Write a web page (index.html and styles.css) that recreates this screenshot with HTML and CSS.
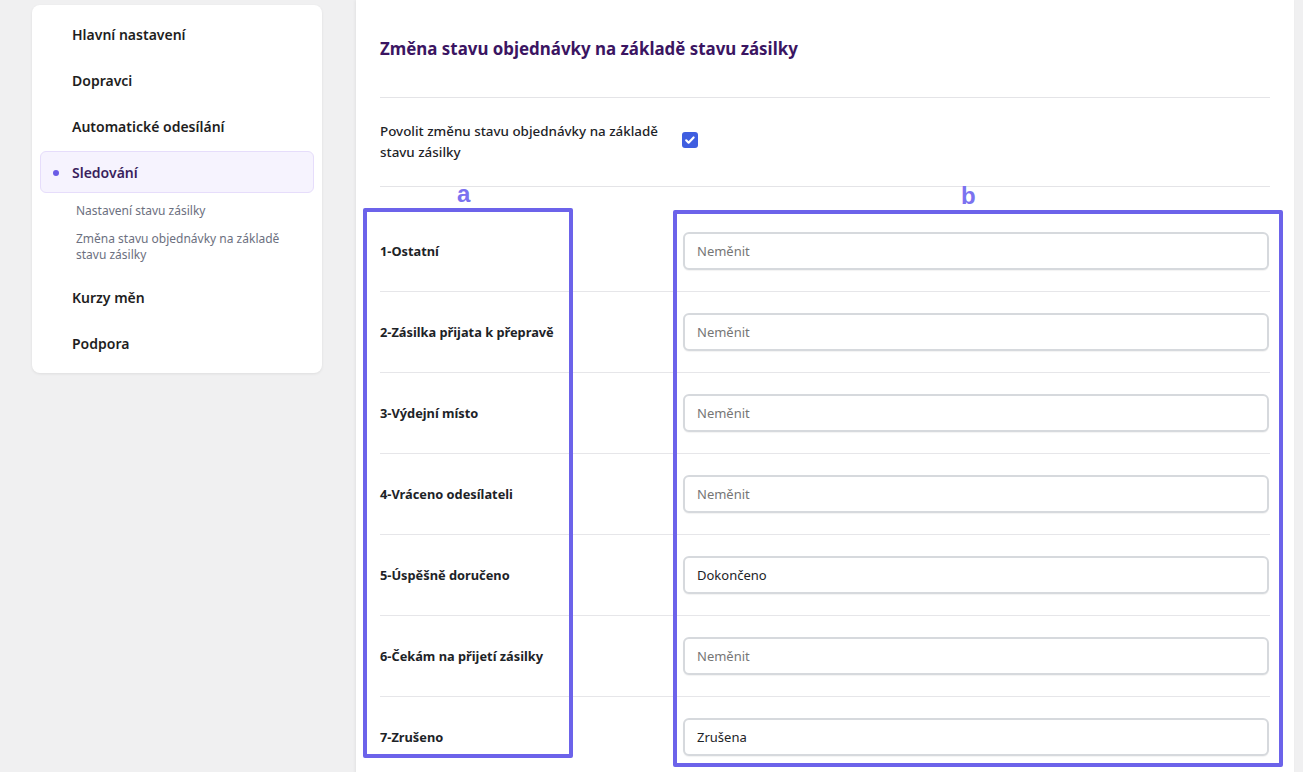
FILE: index.html
```html
<!DOCTYPE html>
<html lang="cs">
<head>
<meta charset="utf-8">
<title>Sledování</title>
<link rel="stylesheet" href="styles.css">
</head>
<body>
<div class="layout">
  <aside class="sidebar">
    <nav class="nav">
      <a class="nav-item">Hlavní nastavení</a>
      <a class="nav-item">Dopravci</a>
      <a class="nav-item">Automatické odesílání</a>
      <a class="nav-item active"><span class="dot"></span>Sledování</a>
      <div class="subnav">
        <a class="sub-item">Nastavení stavu zásilky</a>
        <a class="sub-item">Změna stavu objednávky na základě stavu zásilky</a>
      </div>
      <a class="nav-item">Kurzy měn</a>
      <a class="nav-item">Podpora</a>
    </nav>
  </aside>
  <main class="panel">
    <h1 class="title">Změna stavu objednávky na základě stavu zásilky</h1>
    <div class="enable-row">
      <label class="enable-label">Povolit změnu stavu objednávky na základě stavu zásilky</label>
      <span class="checkbox"><svg viewBox="0 0 16 16" width="16" height="16"><path d="M4.2 8.3l2.4 2.4 5-5.2" fill="none" stroke="#fff" stroke-width="2.2" stroke-linecap="round" stroke-linejoin="round"/></svg></span>
    </div>
    <div class="rows">
      <div class="row first"><span class="row-label">1-Ostatní</span><div class="field placeholder">Neměnit</div></div>
      <div class="row"><span class="row-label">2-Zásilka přijata k přepravě</span><div class="field placeholder">Neměnit</div></div>
      <div class="row"><span class="row-label">3-Výdejní místo</span><div class="field placeholder">Neměnit</div></div>
      <div class="row"><span class="row-label">4-Vráceno odesílateli</span><div class="field placeholder">Neměnit</div></div>
      <div class="row"><span class="row-label">5-Úspěšně doručeno</span><div class="field">Dokončeno</div></div>
      <div class="row"><span class="row-label">6-Čekám na přijetí zásilky</span><div class="field placeholder">Neměnit</div></div>
      <div class="row"><span class="row-label">7-Zrušeno</span><div class="field">Zrušena</div></div>
    </div>
    <div class="annot annot-a"></div>
    <div class="annot annot-b"></div>
    <span class="annot-label label-a">a</span>
    <span class="annot-label label-b">b</span>
  </main>
</div>
</body>
</html>
```
FILE: styles.css
```css
* { box-sizing: border-box; }
html, body { margin: 0; padding: 0; }
body {
  background: #f0f0f1;
  font-family: "Noto Sans", "Open Sans", sans-serif;
  color: #1d2327;
  height: 772px;
  overflow: hidden;
}
.layout {
  display: flex;
  align-items: flex-start;
  padding-left: 32px;
  gap: 34px;
}
.sidebar {
  width: 290px;
  margin-top: 5px;
  background: #fff;
  border-radius: 8px;
  box-shadow: 0 1px 3px rgba(0,0,0,0.08);
  padding: 8px 8px 5px;
}
.nav { display: flex; flex-direction: column; }
.nav-item {
  display: flex;
  align-items: center;
  height: 42px;
  margin-bottom: 4px;
  padding-left: 31px;
  font-size: 14px;
  font-weight: 600;
  color: #1e1e1e;
  border: 1px solid transparent;
  border-radius: 6px;
  position: relative;
}
.nav-item.active {
  background: #f6f3fe;
  border-color: #e6ddfb;
  color: #3a1f5d;
}
.dot {
  position: absolute;
  left: 12px;
  top: 18px;
  width: 6px;
  height: 6px;
  border-radius: 50%;
  background: #6a5be6;
}
.subnav {
  display: flex;
  flex-direction: column;
  gap: 12px;
  padding: 10px 12px 13px 36px;
  margin-top: -4px;
}
.sub-item {
  font-size: 12px;
  line-height: 16px;
  color: #6c7080;
}
.panel {
  position: relative;
  width: 938px;
  min-height: 772px;
  background: #fff;
  box-shadow: -1px 0 3px rgba(0,0,0,0.06);
  padding: 37px 24px 0;
}
.title {
  margin: 0;
  font-size: 16.9px;
  line-height: 24px;
  font-weight: 700;
  color: #3b1562;
  padding-bottom: 36px;
  border-bottom: 1px solid #e4e4e7;
}
.enable-row {
  display: flex;
  align-items: center;
  height: 89px;
  border-bottom: 1px solid #e4e4e7;
}
.enable-label {
  width: 302px;
  font-size: 13.4px;
  line-height: 21px;
  font-weight: 500;
  color: #1d2327;
}
.checkbox {
  display: flex;
  width: 16px;
  height: 16px;
  border-radius: 3px;
  background: #3f5ee0;
  margin-top: -4px;
}
.rows { display: flex; flex-direction: column; }
.row {
  display: grid;
  grid-template-columns: 303px 1fr;
  align-items: center;
  padding: 21px 1px 21px 0;
  border-bottom: 1px solid #e6e6e9;
}
.row.first { padding-top: 45px; }
.row-label {
  font-size: 12.8px;
  font-weight: 700;
  color: #1d2327;
}
.field {
  height: 38px;
  display: flex;
  align-items: center;
  padding: 0 12px;
  border: 2px solid #d6d9dd;
  border-radius: 6px;
  font-size: 13px;
  color: #1d2327;
  background: #fff;
  box-shadow: 0 1px 1px rgba(0,0,0,0.05);
}
.field.placeholder { color: #767676; }
.annot {
  position: absolute;
  border: 4px solid #6c63ea;
  border-radius: 2px;
  pointer-events: none;
}
.annot-a { left: 7px; top: 208px; width: 210px; height: 550px; }
.annot-b { left: 317px; top: 210px; width: 610px; height: 557px; }
.annot-label {
  position: absolute;
  font-family: "Liberation Sans", Arial, sans-serif;
  font-weight: 700;
  font-size: 24px;
  line-height: 24px;
  color: #7b72f0;
}
.label-a { left: 101px; top: 182px; }
.label-b { left: 605px; top: 184px; }
```
